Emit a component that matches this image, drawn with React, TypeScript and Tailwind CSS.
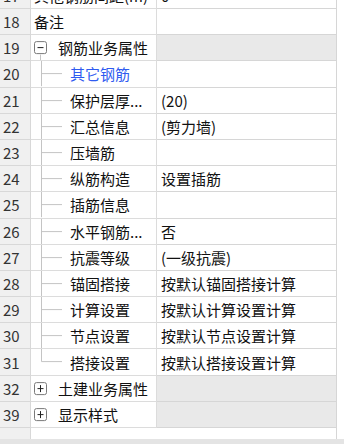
import React from "react";

type Row = {
  n: number;
  name: string;
  value?: string;
  kind: "plain" | "group-open" | "group-closed" | "child" | "child-last";
  blue?: boolean;
};

const rows: Row[] = [
  { n: 17, name: "其他钢筋间距(m)", value: "0", kind: "plain" },
  { n: 18, name: "备注", value: "", kind: "plain" },
  { n: 19, name: "钢筋业务属性", kind: "group-open" },
  { n: 20, name: "其它钢筋", value: "", kind: "child", blue: true },
  { n: 21, name: "保护层厚...", value: "(20)", kind: "child" },
  { n: 22, name: "汇总信息", value: "(剪力墙)", kind: "child" },
  { n: 23, name: "压墙筋", value: "", kind: "child" },
  { n: 24, name: "纵筋构造", value: "设置插筋", kind: "child" },
  { n: 25, name: "插筋信息", value: "", kind: "child" },
  { n: 26, name: "水平钢筋...", value: "否", kind: "child" },
  { n: 27, name: "抗震等级", value: "(一级抗震)", kind: "child" },
  { n: 28, name: "锚固搭接", value: "按默认锚固搭接计算", kind: "child" },
  { n: 29, name: "计算设置", value: "按默认计算设置计算", kind: "child" },
  { n: 30, name: "节点设置", value: "按默认节点设置计算", kind: "child" },
  { n: 31, name: "搭接设置", value: "按默认搭接设置计算", kind: "child-last" },
  { n: 32, name: "土建业务属性", kind: "group-closed" },
  { n: 39, name: "显示样式", kind: "group-closed" },
];

const LINE = "#c4c4c4";

function Expander({ open }: { open: boolean }) {
  return (
    <svg width="27" height="100%" className="shrink-0">
      <rect x="3.5" y="50%" width="12" height="12" rx="2" fill="white" stroke="#7a7a7a" transform="translate(0,-6)" />
      <line x1="6.5" x2="12.5" y1="50%" y2="50%" stroke="#222" strokeWidth="1" />
      {!open && <line x1="9.5" x2="9.5" y1="50%" y2="50%" stroke="#222" />}
      {!open && (
        <rect x="9" y="50%" width="1" height="7" fill="#222" transform="translate(0,-3.5)" />
      )}
      {open && <rect x="9" y="50%" width="1" height="20" fill={LINE} transform="translate(0,7)" />}
    </svg>
  );
}

function Connector({ last }: { last: boolean }) {
  return (
    <svg width="39" height="100%" className="shrink-0">
      <line x1="10.5" x2="10.5" y1="0" y2={last ? "50%" : "100%"} stroke={LINE} strokeWidth="1" />
      <line x1="10.5" x2="31" y1="50%" y2="50%" stroke={LINE} strokeWidth="1" />
    </svg>
  );
}

export default function App() {
  return (
    <div
      className="w-[344px] h-[444px] overflow-hidden bg-white flex flex-col text-[15px] text-[#111]"
      style={{ fontFamily: '"Noto Sans CJK SC", "Noto Sans", sans-serif' }}
    >
      <div className="flex flex-col mt-[-17.2px]">
        {rows.map((r) => {
          const group = r.kind === "group-open" || r.kind === "group-closed";
          return (
            <div key={r.n} className="flex h-[26.2px] shrink-0">
              <div className="w-[31px] shrink-0 bg-[#f0f0f0] border-r border-b border-[#d8d8d8] flex items-center pl-[3px] text-[#333] leading-none">
                {r.n}
              </div>
              <div className="w-[126px] shrink-0 border-r border-b border-[#dcdcdc] flex items-stretch overflow-hidden whitespace-nowrap">
                {group && <Expander open={r.kind === "group-open"} />}
                {(r.kind === "child" || r.kind === "child-last") && (
                  <Connector last={r.kind === "child-last"} />
                )}
                <span
                  className={
                    "flex items-center leading-none " +
                    (r.kind === "plain" ? "pl-[3px] " : "") +
                    (r.blue ? "text-[#2f5bf0]" : "")
                  }
                >
                  {r.name}
                </span>
              </div>
              <div
                className={
                  "w-[180px] shrink-0 border-r border-b border-[#d6d6d6] flex items-center pl-[4px] whitespace-nowrap leading-none " +
                  (group ? "bg-[#e9e9e9]" : "bg-white")
                }
              >
                {r.value}
              </div>
              <div className="flex-1" />
            </div>
          );
        })}
        <div className="flex h-[11px] shrink-0">
          <div className="w-[31px] shrink-0 bg-[#f0f0f0] border-r border-[#d8d8d8]" />
          <div className="w-[126px] shrink-0" />
          <div className="w-[180px] shrink-0 border-r border-[#d6d6d6]" />
        </div>
      </div>
      <div className="flex-1 bg-[#e4e4e4]" />
    </div>
  );
}
